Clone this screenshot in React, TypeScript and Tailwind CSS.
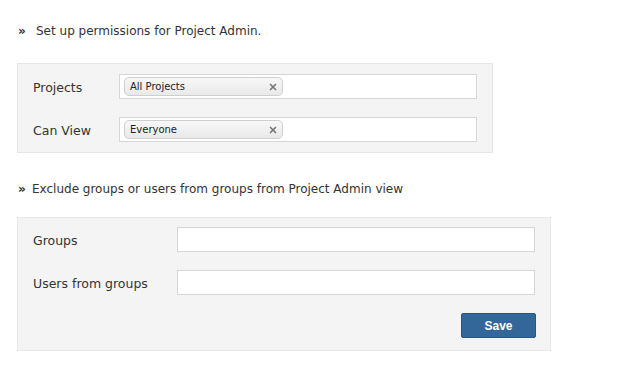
import { X } from 'lucide-react'

function Tag({ label }: { label: string }) {
  return (
    <div className="flex h-[19px] w-[159px] items-center justify-between rounded-[5px] border border-[#cfcfcf] bg-gradient-to-b from-[#f8f8f8] to-[#e9e9e9] pl-[5px] pr-[4px] text-[10px] text-[#222]">
      <span>{label}</span>
      <X size={10} strokeWidth={4} className="text-[#777]" />
    </div>
  )
}

function Field({ label, children, labelWidth }: { label: string; children?: React.ReactNode; labelWidth: string }) {
  return (
    <div className="flex items-center">
      <div className={`${labelWidth} pt-[3px] text-[12.5px] text-[#333]`}>{label}</div>
      <div className="flex h-[25px] w-[358px] items-center border border-[#d6d6d6] bg-white px-[4px]">
        {children}
      </div>
    </div>
  )
}

export default function App() {
  return (
    <div className="min-h-[373px] bg-white pl-[17px] pt-[24px] text-[#333]" style={{ fontFamily: '"DejaVu Sans", Verdana, sans-serif' }}>
      <div className="flex h-[14px] items-center text-[12px]">
        <span className="w-[19px] pl-[1px] text-[12px] font-bold leading-none">»</span>
        <span>Set up permissions for Project Admin.</span>
      </div>

      <div className="mt-[25px] flex w-[476px] flex-col gap-[18px] border border-[#e6e6e6] bg-[#f4f4f4] py-[10px] pl-[15px]">
        <Field label="Projects" labelWidth="w-[86px]">
          <Tag label="All Projects" />
        </Field>
        <Field label="Can View" labelWidth="w-[86px]">
          <Tag label="Everyone" />
        </Field>
      </div>

      <div className="mt-[29px] flex h-[14px] items-center text-[12px]">
        <span className="w-[15px] pl-[1px] text-[12px] font-bold leading-none">»</span>
        <span>Exclude groups or users from groups from Project Admin view</span>
      </div>

      <div className="mt-[21px] flex w-[534px] flex-col border border-[#e6e6e6] bg-[#f4f4f4] pb-[12px] pl-[15px] pt-[9px]">
        <div className="flex flex-col gap-[18px]">
          <Field label="Groups" labelWidth="w-[144px]" />
          <Field label="Users from groups" labelWidth="w-[144px]" />
        </div>
        <div className="mt-[18px] flex w-[503px] justify-end">
          <button
            className="h-[25px] w-[75px] rounded-[2px] border border-[#285683] bg-[#336699] text-[12px] font-bold text-white"
            style={{ fontFamily: '"Liberation Sans", Arial, sans-serif' }}
          >
            Save
          </button>
        </div>
      </div>
    </div>
  )
}
